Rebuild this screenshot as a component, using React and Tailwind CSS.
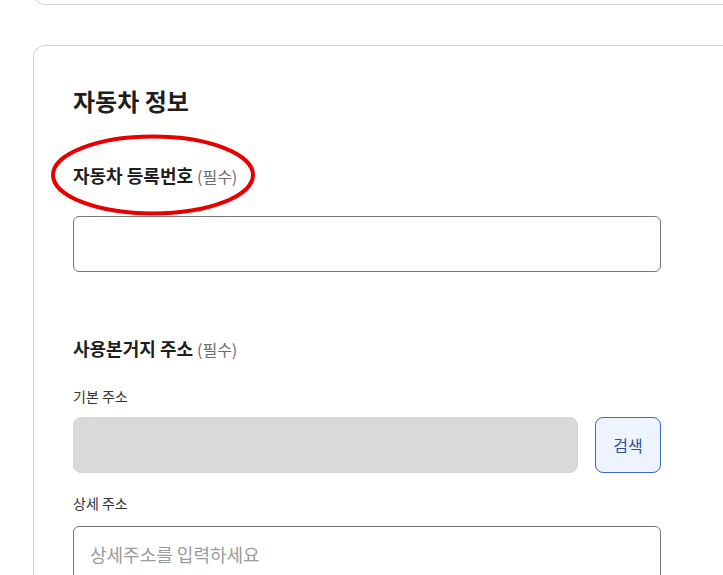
import React from "react";

const Required = () => (
  <span className="ml-[4px] text-[16px] font-normal text-[#6b6b6b]">(필수)</span>
);

const App = () => {
  return (
    <div className="min-h-screen overflow-hidden bg-white font-['Noto_Sans_CJK_KR','Noto_Sans',sans-serif] text-[#1e1e1e]">
      <div className="pl-[33px]">
        {/* previous card, only its bottom edge is visible */}
        <div className="-mt-[40px] h-[45px] w-[760px] rounded-xl border border-[#d2d2d2]" />

        <div className="mt-[40px] w-[760px] rounded-xl border border-[#d2d2d2] pb-10 pl-[39px] pt-[40px]">
          <div className="w-[588px]">
            <h2 className="text-[24px] font-bold leading-[30px]">자동차 정보</h2>

            <div className="relative mt-[47px]">
              <label className="block text-[18px] font-bold leading-[24px]">
                자동차 등록번호
                <Required />
              </label>
              <svg
                className="pointer-events-none absolute left-[-23px] top-[-29px]"
                width="206"
                height="82"
                viewBox="0 0 206 82"
              >
                <ellipse
                  cx="103"
                  cy="41"
                  rx="100"
                  ry="38.5"
                  fill="none"
                  stroke="#e60000"
                  strokeWidth="4"
                />
              </svg>
            </div>

            <input
              type="text"
              className="mt-[28px] block h-[56px] w-full rounded-md border border-[#767676] px-4 text-[18px] outline-none"
            />

            <div className="mt-[64px] text-[18px] font-bold leading-[24px]">
              사용본거지 주소
              <Required />
            </div>

            <div className="mt-[25px] text-[14px] leading-[20px] text-[#333]">기본 주소</div>
            <div className="mt-[11px] flex gap-[17px]">
              <input
                type="text"
                disabled
                className="h-[56px] flex-1 rounded-lg border border-[#d6d6d6] bg-[#d9d9d9] px-4"
              />
              <button className="h-[56px] w-[66px] rounded-lg border border-[#3c67c4] bg-[#eef4fd] text-[16px] text-[#2c4f9c]">
                검색
              </button>
            </div>

            <div className="mt-[20px] text-[14px] leading-[20px] text-[#333]">상세 주소</div>
            <input
              type="text"
              placeholder="상세주소를 입력하세요"
              className="mt-[13px] block h-[56px] w-full rounded-md border border-[#767676] px-4 text-[18px] outline-none placeholder:text-[#9a9a9a]"
            />
          </div>
        </div>
      </div>
    </div>
  );
};

export default App;
